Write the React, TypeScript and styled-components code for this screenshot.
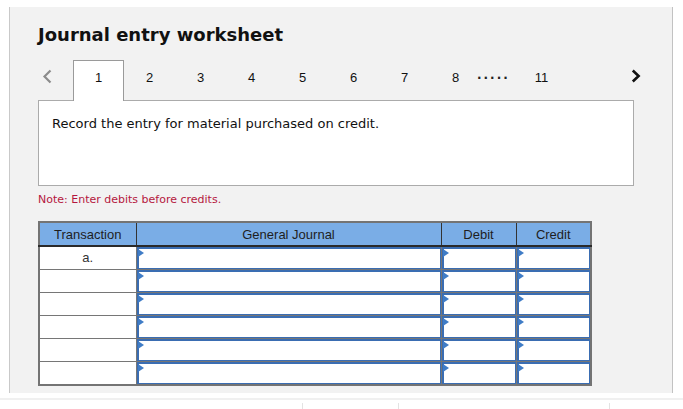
import React from "react";
import styled, { createGlobalStyle } from "styled-components";

const GlobalStyle = createGlobalStyle`
  html, body { margin: 0; padding: 0; background: #ffffff; }
  body { font-family: "DejaVu Sans", Verdana, sans-serif; color: #000; }
  * { box-sizing: border-box; }
`;

const Page = styled.div`
  width: 683px;
  height: 409px;
  overflow: hidden;
`;

const PanelWrap = styled.div`
  padding: 7px 0 0 9px;
`;

const Panel = styled.section`
  width: 664px;
  height: 386px;
  background: #f2f2f2;
  border-left: 1px solid #c9c9c9;
  border-right: 1px solid #c2c2c2;
  padding: 17px 0 0 28px;
`;

const Title = styled.h1`
  margin: 0;
  font-family: "DejaVu Sans", Verdana, sans-serif;
  font-weight: bold;
  font-size: 18px;
  line-height: 22px;
  color: #111;
`;

const TabBar = styled.nav`
  display: flex;
  align-items: flex-start;
  height: 40px;
  margin-top: 14px;
  width: 640px;
`;

const Arrow = styled.button<{ $disabled?: boolean; $gap?: number }>`
  border: 0;
  background: transparent;
  padding: 9px 0 0 ${(p) => (p.$disabled ? 4 : 0)}px;
  margin-left: ${(p) => p.$gap ?? 0}px;
  width: ${(p) => (p.$disabled ? 35 : 14)}px;
  height: 40px;
  display: flex;
  align-items: flex-start;
  color: ${(p) => (p.$disabled ? "#8c8c8c" : "#111")};
  cursor: pointer;
`;

const Tab = styled.div<{ $active?: boolean }>`
  width: 51px;
  height: ${(p) => (p.$active ? 41 : 40)}px;
  padding-top: 9px;
  text-align: center;
  font-family: "Liberation Sans", Arial, sans-serif;
  font-size: 13px;
  line-height: 15px;
  color: #111;
  background: ${(p) => (p.$active ? "#ffffff" : "transparent")};
  border: 1px solid ${(p) => (p.$active ? "#9a9a9a" : "transparent")};
  border-bottom: 0;
  position: ${(p) => (p.$active ? "relative" : "static")};
  z-index: 1;
`;

const Ellipsis = styled.div`
  width: 39px;
  margin-left: -4px;
  padding-top: 8px;
  font-family: "DejaVu Sans", Verdana, sans-serif;
  font-weight: bold;
  font-size: 12px;
  line-height: 15px;
  letter-spacing: 2px;
  color: #222;
`;

const Prompt = styled.div`
  width: 596px;
  height: 86px;
  background: #fff;
  border: 1px solid #ababab;
  padding: 15px 13px;
  font-family: "DejaVu Sans", Verdana, sans-serif;
  font-size: 13px;
  line-height: 16px;
  color: #111;
`;

const Note = styled.p`
  margin: 7px 0 0;
  font-family: "DejaVu Sans", Verdana, sans-serif;
  font-size: 11px;
  line-height: 14px;
  color: #b5173e;
`;

const Table = styled.table`
  margin-top: 14px;
  border-collapse: collapse;
  width: 552px;
  table-layout: fixed;
  font-family: "Liberation Sans", Arial, sans-serif;
  font-size: 13px;
  border: 2px solid #747474;
`;

const HeadCell = styled.th<{ $w: number }>`
  width: ${(p) => p.$w}px;
  height: 24px;
  padding: 0;
  background: #7aade6;
  color: #1e1e1e;
  font-weight: normal;
  text-align: center;
  border: 1px solid #333;
  border-top: 2px solid #747474;
  border-bottom: 2px solid #2a2a2a;
`;

const TxCell = styled.td`
  height: 23px;
  padding: 0;
  background: #fff;
  border: 1px solid #767676;
  text-align: center;
  color: #333;
  line-height: 20px;
`;

const InputCell = styled.td`
  height: 23px;
  padding: 0;
  border: 1px solid #767676;
  background: #fff;
`;

const Field = styled.div`
  position: relative;
  height: 22px;
  border: 1px solid #3a6db2;
  border-top-width: 2px;
  border-left-width: 2px;
  background: #fff;
  &::before {
    content: "";
    position: absolute;
    left: -1px;
    top: 0;
    border-left: 6px solid #3f7cc6;
    border-top: 4px solid transparent;
    border-bottom: 4px solid transparent;
  }
`;

const Footer = styled.div`
  margin-top: 5px;
  border-top: 2px solid #f0f0f0;
  display: grid;
  grid-template-columns: 302px 96px 211px 1fr;
  height: 12px;
  padding-top: 3px;
`;

const FooterCell = styled.div<{ $edge?: boolean }>`
  border-left: ${(p) => (p.$edge ? "0" : "1px solid #e3e3e3")};
`;

const ChevronLeft = () => (
  <svg width="10" height="15" viewBox="0 0 10 15" aria-hidden>
    <polyline points="8.5,1.5 2.5,7.5 8.5,13.5" fill="none" stroke="currentColor" strokeWidth="2.2" />
  </svg>
);

const ChevronRight = () => (
  <svg width="10" height="14" viewBox="0 0 10 14" aria-hidden>
    <polyline points="1.8,1.5 7.6,7 1.8,12.5" fill="none" stroke="currentColor" strokeWidth="2.6" />
  </svg>
);

const rows = ["a.", "", "", "", "", ""];

export default function App() {
  return (
    <Page>
      <GlobalStyle />
      <PanelWrap>
        <Panel>
          <Title>Journal entry worksheet</Title>
          <TabBar>
            <Arrow $disabled aria-label="previous">
              <ChevronLeft />
            </Arrow>
            {[1, 2, 3, 4, 5, 6, 7, 8].map((n) => (
              <Tab key={n} $active={n === 1}>
                {n}
              </Tab>
            ))}
            <Ellipsis>.....</Ellipsis>
            <Tab>11</Tab>
            <Arrow $gap={64} aria-label="next">
              <ChevronRight />
            </Arrow>
          </TabBar>
          <Prompt>Record the entry for material purchased on credit.</Prompt>
          <Note>Note: Enter debits before credits.</Note>
          <Table>
            <thead>
              <tr>
                <HeadCell $w={97}>Transaction</HeadCell>
                <HeadCell $w={305}>General Journal</HeadCell>
                <HeadCell $w={75}>Debit</HeadCell>
                <HeadCell $w={75}>Credit</HeadCell>
              </tr>
            </thead>
            <tbody>
              {rows.map((t, i) => (
                <tr key={i}>
                  <TxCell>{t}</TxCell>
                  <InputCell>
                    <Field />
                  </InputCell>
                  <InputCell>
                    <Field />
                  </InputCell>
                  <InputCell>
                    <Field />
                  </InputCell>
                </tr>
              ))}
            </tbody>
          </Table>
        </Panel>
      </PanelWrap>
      <Footer>
        <FooterCell $edge />
        <FooterCell />
        <FooterCell />
        <FooterCell />
      </Footer>
    </Page>
  );
}
